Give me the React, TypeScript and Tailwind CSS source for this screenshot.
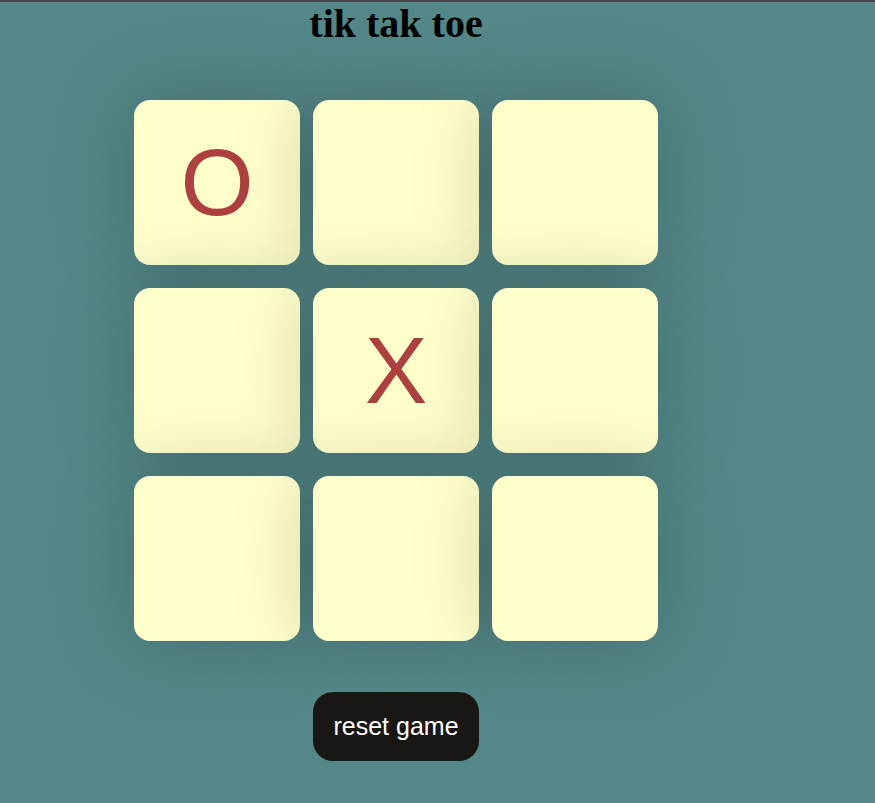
const board = ["O", "", "", "", "X", "", "", "", ""];

function Cell({ value }: { value: string }) {
  return (
    <div className="w-[166px] h-[165px] rounded-[16px] bg-[#ffffcc] shadow-[0_0_80px_rgba(0,0,0,0.22)] flex items-center justify-center text-[#ae4040] text-[94px] leading-none font-['Liberation_Sans',Arial,sans-serif]">
      {value}
    </div>
  );
}

export default function App() {
  return (
    <div className="min-h-screen bg-[#548888] border-t-2 border-[#464646]">
      <div className="w-[792px] flex flex-col items-center">
        <h1 className="m-0 text-[40px] leading-[44px] font-bold text-black font-['Liberation_Serif','Times_New_Roman',serif]">
          tik tak toe
        </h1>
        <div className="mt-[54px] grid grid-cols-[166px_166px_166px] gap-x-[13px] gap-y-[23px]">
          {board.map((v, i) => (
            <Cell key={i} value={v} />
          ))}
        </div>
        <button className="mt-[51px] w-[166px] h-[69px] rounded-[20px] bg-[#181713] text-white text-[25px] font-['Liberation_Sans',Arial,sans-serif]">
          reset game
        </button>
      </div>
    </div>
  );
}
